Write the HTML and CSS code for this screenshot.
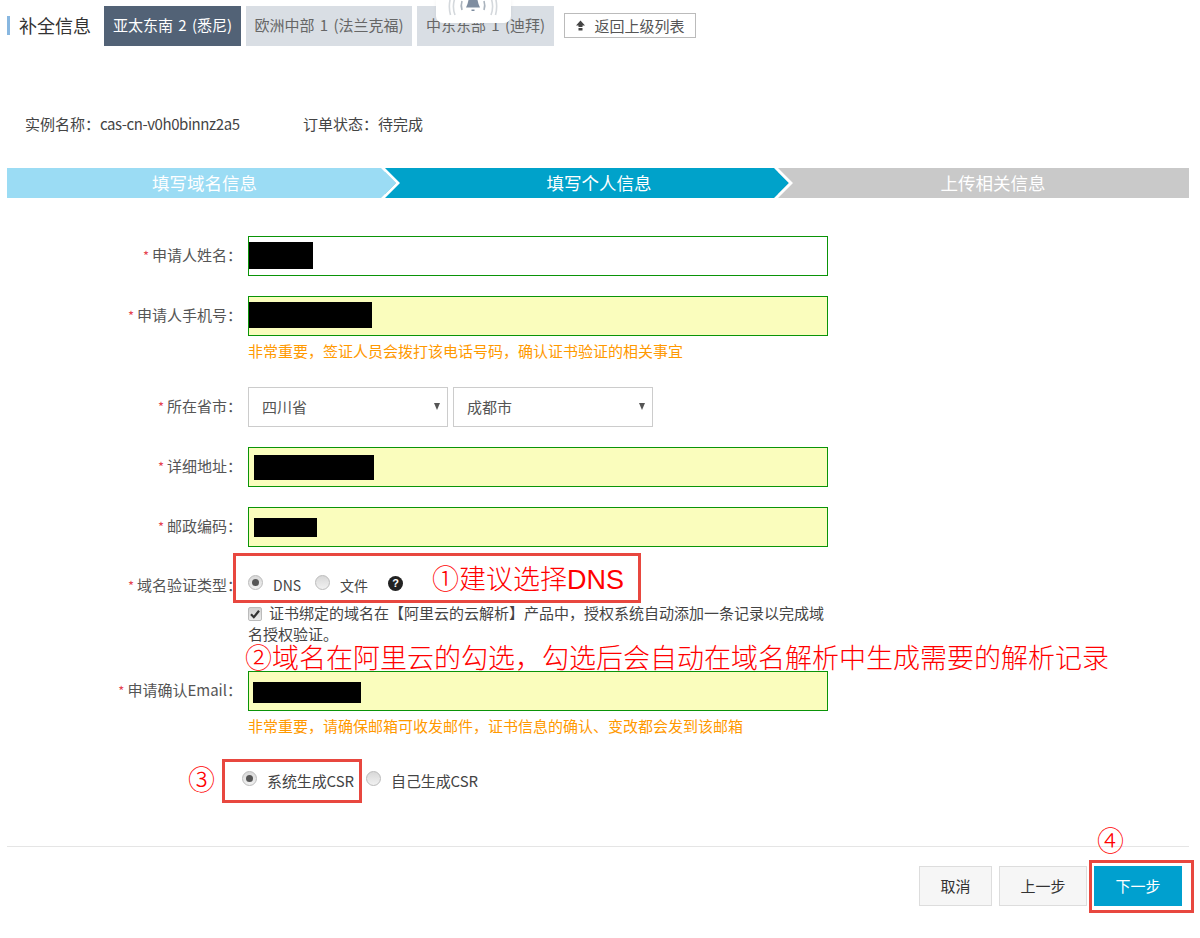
FILE: index.html
```html
<!DOCTYPE html>
<html lang="zh-CN">
<head>
<meta charset="utf-8">
<title>补全信息</title>
<link rel="stylesheet" href="styles.css">
</head>
<body>
<div class="page">
  <header class="topbar">
    <h1 class="title">补全信息</h1>
    <nav class="tabs">
      <a class="tab tab-active">亚太东南 2 (悉尼)</a>
      <a class="tab tab-wide">欧洲中部 1 (法兰克福)</a>
      <a class="tab">中东东部 1 (迪拜)</a>
    </nav>
    <a class="back">
      <svg class="back-icon" viewBox="0 0 11 11"><path d="M5.500 0.500 10 5.500H7.500V7H3.500V5.500H1Z M3.500 8H7.500V10.500H3.500Z" fill="#444"/></svg>
      返回上级列表
    </a>
  </header>
  <div class="bell">
    <svg viewBox="0 0 75 23" width="75" height="23">
      <g fill="none" stroke="#d4d8dc" stroke-width="1.600">
        <path d="M19 -2a24 24 0 0 0 0 17"/><path d="M55 -2a24 24 0 0 1 0 17"/>
        <path d="M14.500 -2a32 32 0 0 0 0 17"/><path d="M59.500 -2a32 32 0 0 1 0 17"/>
      </g>
      <g fill="none" stroke="#aab3bd" stroke-width="1.600">
        <path d="M26 1a14 14 0 0 0 0 9"/><path d="M48 1a14 14 0 0 1 0 9"/>
      </g>
      <path d="M33 -2h8l1.500 6 1.500 3.500H30l1.500-3.500Z" fill="#7f8da0"/>
      <rect x="35.500" y="9.500" width="3" height="1.500" fill="#7f8da0"/>
    </svg>
  </div>

  <div class="info">
    <span class="info-item">实例名称：<span class="info-code">cas-cn-v0h0binnz2a5</span></span>
    <span class="info-item">订单状态：待完成</span>
  </div>

  <ol class="steps">
    <li class="step step-done">填写域名信息</li>
    <li class="step step-current">填写个人信息</li>
    <li class="step step-todo">上传相关信息</li>
  </ol>

  <form class="form">
    <div class="row">
      <label class="label"><i class="req">*</i>申请人姓名：</label>
      <div class="input input-plain input-up"><span class="mask mask-name"></span></div>
    </div>
    <div class="row row-tight">
      <label class="label"><i class="req">*</i>申请人手机号：</label>
      <div class="input input-up"><span class="mask mask-phone"></span></div>
    </div>
    <p class="hint">非常重要，签证人员会拨打该电话号码，确认证书验证的相关事宜</p>

    <div class="row">
      <label class="label"><i class="req">*</i>所在省市：</label>
      <div class="select">四川省</div>
      <div class="select select-gap">成都市</div>
    </div>
    <div class="row">
      <label class="label"><i class="req">*</i>详细地址：</label>
      <div class="input pad-6"><span class="mask mask-addr"></span></div>
    </div>
    <div class="row">
      <label class="label"><i class="req">*</i>邮政编码：</label>
      <div class="input pad-6"><span class="mask mask-zip"></span></div>
    </div>

    <div class="row row-radio">
      <label class="label"><i class="req">*</i>域名验证类型：</label>
      <div class="options">
        <span class="radio radio-on"></span><span class="opt opt-dns">DNS</span>
        <span class="radio radio-file"></span><span class="opt opt-file">文件</span>
        <span class="help">?</span>
      </div>
    </div>
    <div class="check-row">
      <span class="check"><svg viewBox="0 0 12 12" width="12" height="12"><path d="M2 6.300 4.800 9.200 10 2.800" fill="none" stroke="#333" stroke-width="2.200"/></svg></span>证书绑定的域名在【阿里云的云解析】产品中，授权系统自动添加一条记录以完成域名授权验证。
    </div>

    <div class="row row-tight">
      <label class="label"><i class="req">*</i>申请确认Email：</label>
      <div class="input pad-5"><span class="mask mask-mail"></span></div>
    </div>
    <p class="hint">非常重要，请确保邮箱可收发邮件，证书信息的确认、变改都会发到该邮箱</p>

    <div class="csr">
      <span class="radio radio-on"></span><span class="opt opt-csr">系统生成CSR</span>
      <span class="radio"></span><span class="opt opt-csr">自己生成CSR</span>
    </div>
  </form>

  <footer class="footer">
    <button class="btn btn-cancel" type="button">取消</button>
    <button class="btn btn-wide" type="button">上一步</button>
    <button class="btn btn-wide btn-primary" type="button">下一步</button>
  </footer>

  <div class="mark mark-dns"></div>
  <div class="mark mark-csr"></div>
  <div class="mark mark-next"></div>
  <div class="note note-1">①建议选择DNS</div>
  <div class="note note-2">②域名在阿里云的勾选，勾选后会自动在域名解析中生成需要的解析记录</div>
  <div class="note note-3">③</div>
  <div class="note note-4">④</div>
</div>
</body>
</html>
```
FILE: styles.css
```css
* { box-sizing: border-box; }
html, body { margin: 0; padding: 0; background: #fff; }
body { font-family: "Noto Sans CJK TC", "Noto Sans CJK SC", "Noto Sans", sans-serif; font-size: 15px; color: #333; }
.page { position: relative; width: 1200px; height: 938px; overflow: hidden; padding-top: 6px; }

.topbar { display: flex; align-items: flex-start; height: 40px; padding-left: 7px; }
.title { flex: none; margin: 10px 14px 0 0; padding-left: 9px; border-left: 3px solid #88b7e0; width: 83px; height: 19px; font-size: 18px; font-weight: 400; line-height: 19px; color: #333; white-space: nowrap; }
.tabs { display: flex; gap: 5px; }
.tab { display: block; width: 137px; height: 40px; line-height: 38px; text-align: center; word-spacing: 2px; background: #d9dee4; color: #666; font-size: 15px; white-space: nowrap; }
.tab-wide { width: 166px; }
.tab-active { background: #526276; color: #fff; }
.back { display: flex; align-items: center; justify-content: center; gap: 8px; margin: 7px 0 0 10px; width: 132px; height: 25px; border: 1px solid #bbb; color: #555; font-size: 15px; line-height: 21px; background: #fff; }
.back-icon { width: 11px; height: 11px; }
.bell { position: absolute; left: 436px; top: 0; width: 75px; height: 23px; background: #fff; border-radius: 0 0 7px 7px; box-shadow: 0 0 4px rgba(0,0,0,.06); }
.bell svg { display: block; }

.info { display: flex; margin-top: 67px; padding-left: 25px; height: 23px; line-height: 22px; color: #444; font-size: 15px; }
.info-item:first-child { width: 278px; }
.info-code { letter-spacing: -0.430px; }

.steps { list-style: none; display: flex; margin: 32px 0 0 7px; padding: 0; width: 1182px; height: 30px; }
.step { position: relative; height: 30px; line-height: 29px; text-align: center; color: #fff; font-size: 17.500px; }
.step-done { width: 378px; background: #9bdcf4; padding-left: 17px; }
.step-current { width: 393px; background: #00a2ca; padding-left: 35px; }
.step-todo { flex: 1; background: #c9c9c9; padding-left: 19px; }
.step-done::before, .step-current::before { content: ""; position: absolute; top: 0; right: -11px; width: 15px; height: 30px; z-index: 1; clip-path: polygon(0 0, 100% 50%, 0 100%); }
.step-done::before { background: #9bdcf4; }
.step-current::before { background: #00a2ca; }
.step-done::after, .step-current::after { content: ""; position: absolute; top: 0; right: -15px; width: 19px; height: 30px; z-index: 2; background: #fff; clip-path: polygon(0 0, 4px 0, 19px 50%, 4px 100%, 0 100%, 15px 50%); }

.form { margin: 38px 0 0; }
.row { display: flex; align-items: center; height: 40px; margin-bottom: 20px; }
.row-tight { margin-bottom: 0; }
.label { flex: none; width: 242px; margin-right: 6px; padding-bottom: 2px; text-align: right; white-space: nowrap; color: #555; font-size: 15px; line-height: 22px; }
.req { font-style: normal; color: #e5434f; margin-right: 3px; font-size: 13px; }
.input { display: flex; align-items: center; width: 580px; height: 40px; border: 1px solid #0a9408; background: #fafdbd; }
.input-plain { background: #fff; }
.input-up { padding-bottom: 2px; }
.pad-5 { padding: 2px 0 0 4px; }
.pad-6 { padding-left: 5px; }
.mask { display: block; background: #000; }
.mask-name { width: 64px; height: 27px; }
.mask-phone { width: 123px; height: 26px; }
.mask-addr { width: 120px; height: 25px; }
.mask-zip { width: 63px; height: 19px; }
.mask-mail { width: 108px; height: 21px; }

.hint { margin: 0 0 20px 248px; height: 31px; line-height: 30px; color: #ff9900; font-size: 15px; white-space: nowrap; }

.select { position: relative; width: 200px; height: 40px; border: 1px solid #ccc; line-height: 37px; padding-left: 13px; color: #555; font-size: 15px; background: #fff; }
.select::after { content: ""; position: absolute; right: 7px; top: 15px; border-style: solid; border-width: 7px 3.500px 0; border-color: #555 transparent transparent; }
.select-gap { margin-left: 5px; }

.row-radio { height: 36px; margin: 0; align-items: flex-start; padding-top: 7px; }
.options { display: flex; align-items: flex-start; margin-top: 1px; }
.radio { flex: none; display: block; position: relative; width: 15px; height: 15px; border-radius: 50%; border: 1px solid #bbb; background: linear-gradient(#d8d8d8, #f1f1f1); }
.radio-on::after { content: ""; position: absolute; left: 3px; top: 3px; width: 7px; height: 7px; border-radius: 50%; background: #555; }
.radio-file { margin-left: 13px; }
.opt { font-size: 14px; line-height: 20px; color: #444; }
.opt-dns { margin: 0 0 0 10px; width: 29px; }
.opt-file { margin: 0 0 0 10px; width: 30px; }
.help { flex: none; margin: 1px 0 0 18px; width: 15px; height: 15px; border-radius: 50%; background: #222; color: #fff; font-size: 11px; font-weight: 700; line-height: 15px; text-align: center; font-family: "Liberation Sans", sans-serif; }

.check-row { margin: -1px 0 27px 248px; width: 580px; height: 42px; font-size: 15px; line-height: 21px; color: #444; }
.check { display: inline-flex; align-items: center; justify-content: center; width: 14px; height: 14px; margin-right: 7px; vertical-align: -1px; border: 1px solid #bbb; border-radius: 2px; background: linear-gradient(#d0d0d0, #ececec); }

.csr { display: flex; align-items: flex-start; height: 36px; padding: 9px 0 0 242px; }
.opt-csr { flex: none; width: 87px; margin: 0 12px 0 10px; font-size: 15px; letter-spacing: -0.100px; white-space: nowrap; }

.footer { display: flex; justify-content: flex-end; gap: 7px; margin: 48px 11px 0 7px; padding: 19px 7px 0 0; border-top: 1px solid #e5e5e5; width: 1182px; }
.btn { height: 40px; border: 1px solid #ddd; background: #f6f6f6; color: #333; font: 15px "Noto Sans CJK TC", sans-serif; padding: 0 0 2px; }
.btn-cancel { width: 73px; }
.btn-wide { width: 88px; }
.btn-primary { background: #00a0cf; border-color: #00a0cf; color: #fff; }

.mark { position: absolute; border: 3px solid #e8473f; }
.mark-dns { left: 233px; top: 553px; width: 408px; height: 50px; }
.mark-csr { left: 222px; top: 759px; width: 140px; height: 44px; }
.mark-next { left: 1089px; top: 860px; width: 105px; height: 53px; }

.note { position: absolute; color: #f00; font-size: 27px; line-height: 36px; white-space: nowrap; font-family: "Noto Sans CJK SC", sans-serif; font-weight: 300; }
.note-1 { left: 432px; top: 562px; font-family: "Liberation Sans", "Noto Sans CJK SC", sans-serif; }
.note-2 { left: 245px; top: 639px; }
.note-3 { left: 188px; top: 761px; }
.note-4 { left: 1097px; top: 822px; }
```
